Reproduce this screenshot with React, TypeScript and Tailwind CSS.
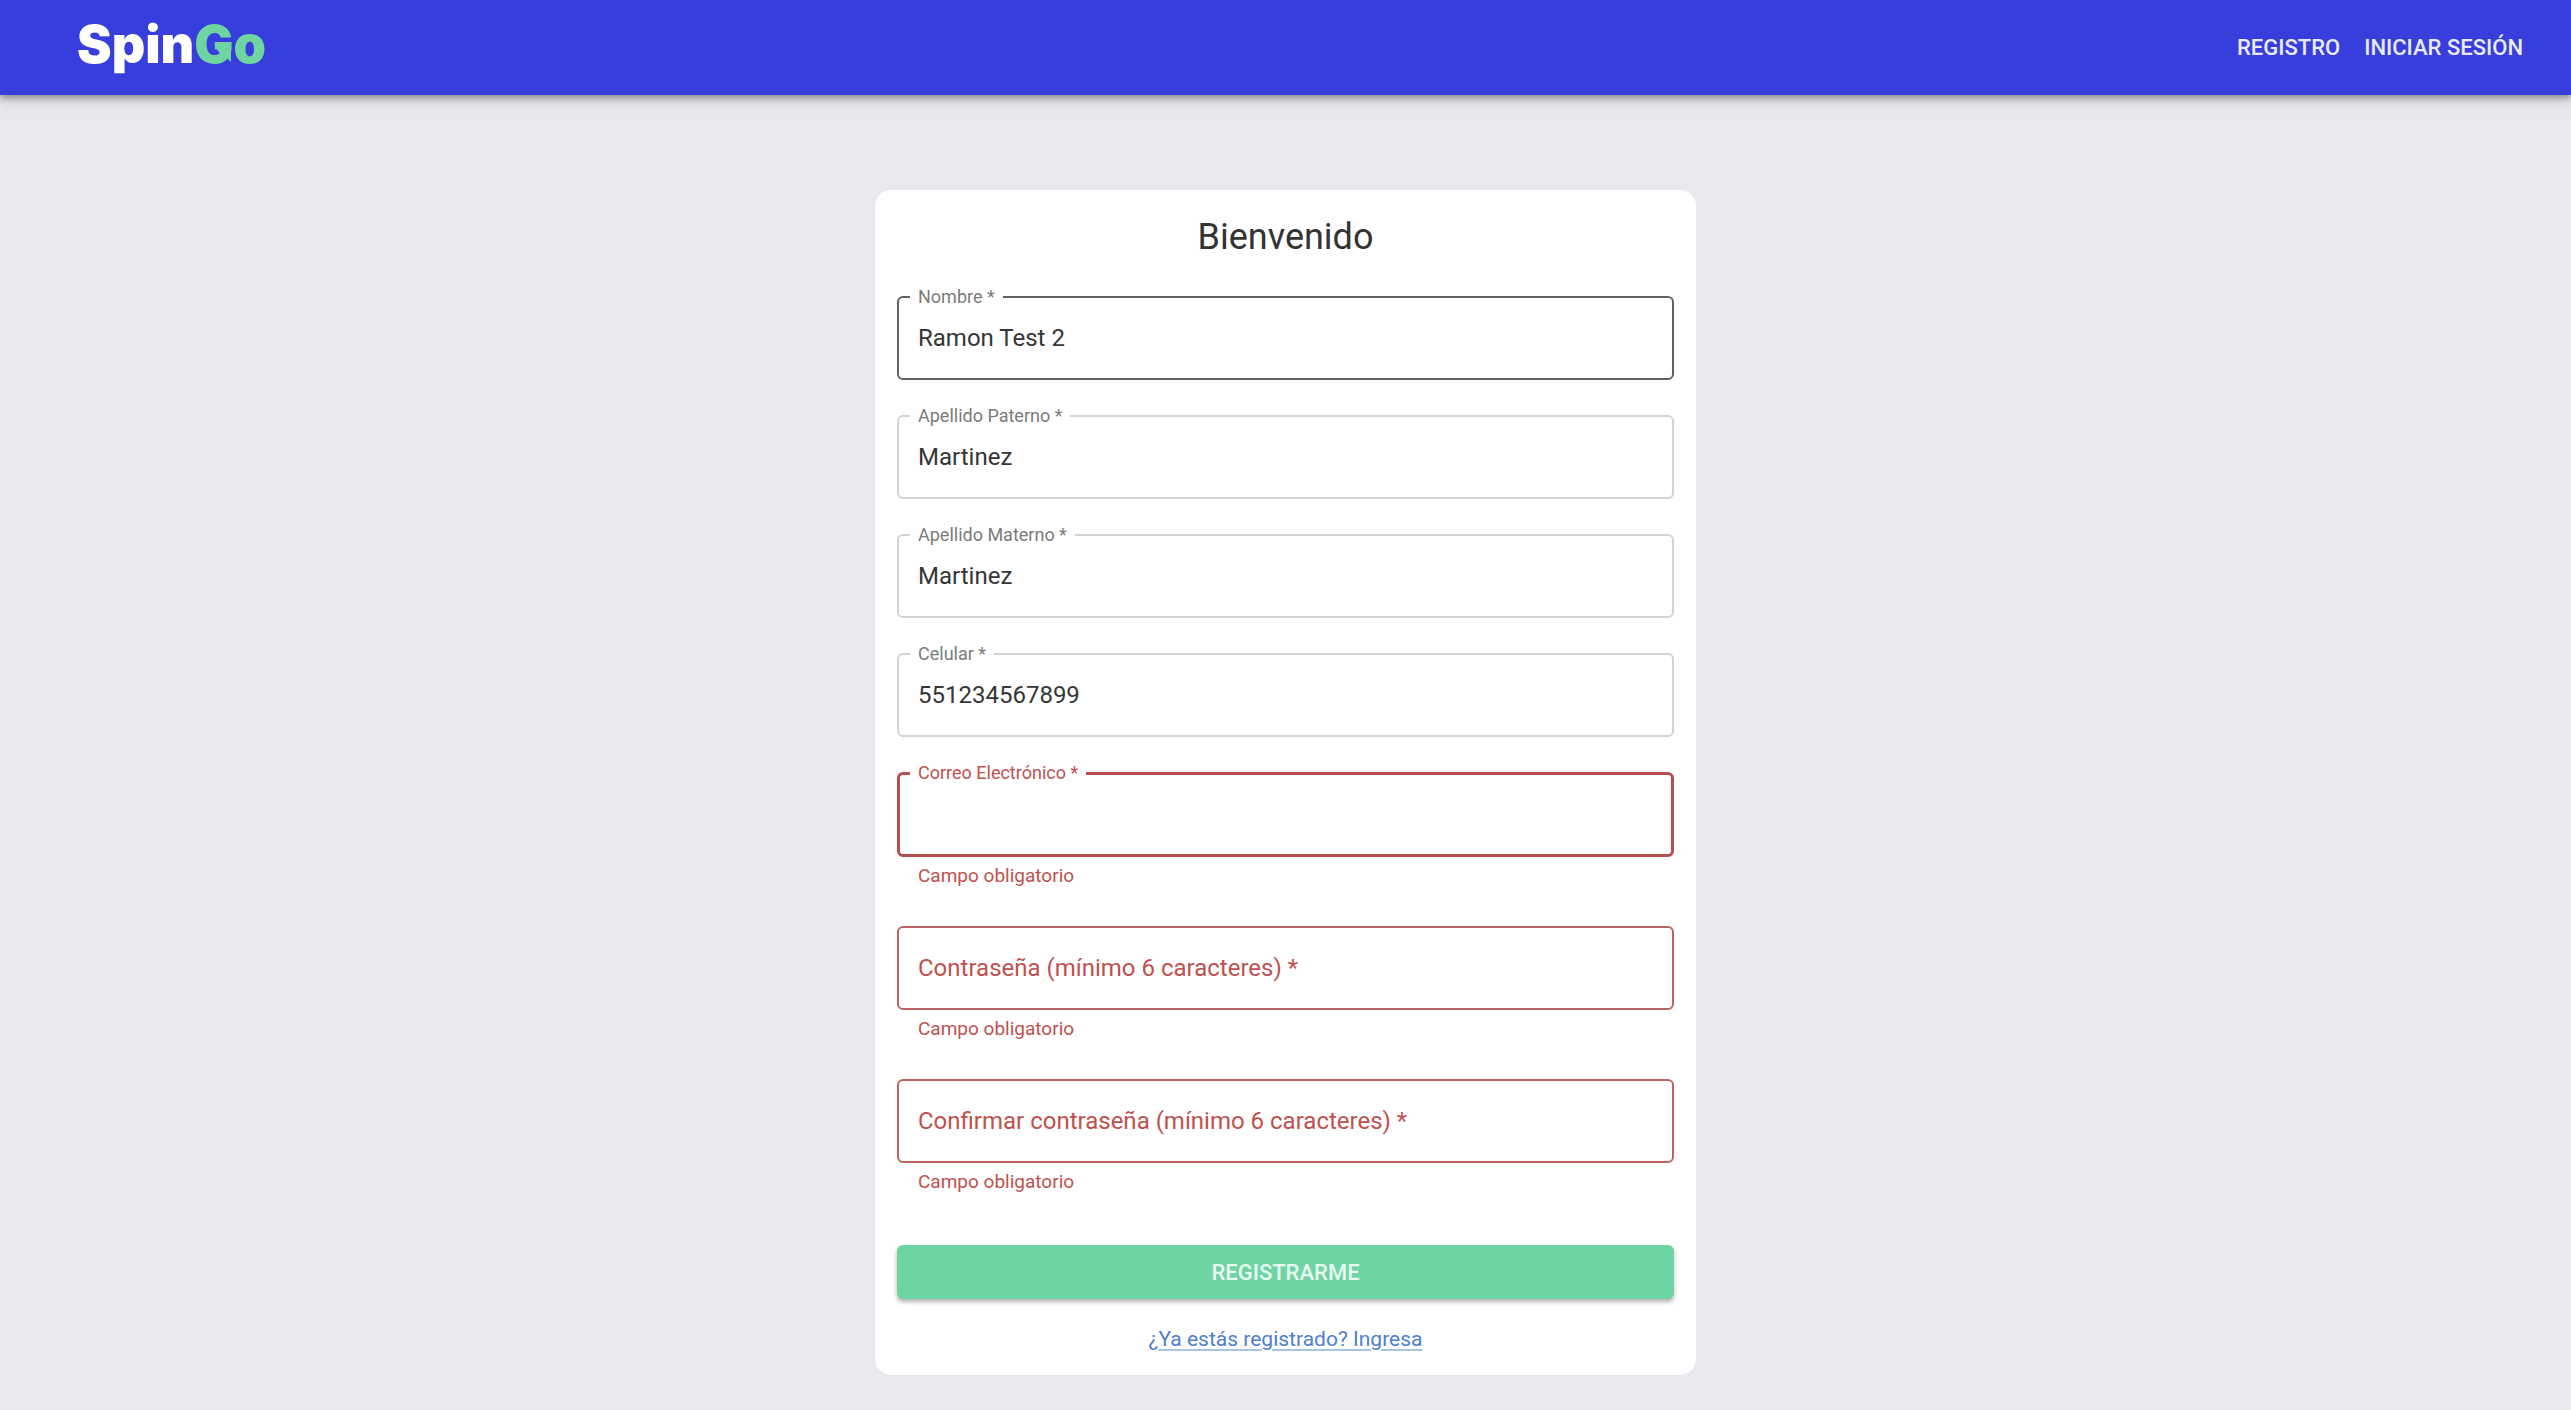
import React, { useState } from 'react';
import clsx from 'clsx';

type FieldState = 'normal' | 'hover' | 'error' | 'errorFocus';

interface Field {
  id: string;
  label: string;
  type: string;
  value: string;
  state: FieldState;
  helper?: string;
}

const fields: Field[] = [
  { id: 'nombre', label: 'Nombre *', type: 'text', value: 'Ramon Test 2', state: 'hover' },
  { id: 'paterno', label: 'Apellido Paterno *', type: 'text', value: 'Martinez', state: 'normal' },
  { id: 'materno', label: 'Apellido Materno *', type: 'text', value: 'Martinez', state: 'normal' },
  { id: 'celular', label: 'Celular *', type: 'tel', value: '551234567899', state: 'normal' },
  { id: 'correo', label: 'Correo Electrónico *', type: 'email', value: '', state: 'errorFocus', helper: 'Campo obligatorio' },
  { id: 'password', label: 'Contraseña (mínimo 6 caracteres) *', type: 'password', value: '', state: 'error', helper: 'Campo obligatorio' },
  { id: 'confirm', label: 'Confirmar contraseña (mínimo 6 caracteres) *', type: 'password', value: '', state: 'error', helper: 'Campo obligatorio' },
];

const borders: Record<FieldState, string> = {
  normal: 'border-2 border-[#d3d3d3] px-[11px]',
  hover: 'border-2 border-[#626262] px-[11px]',
  error: 'border-2 border-[#bd6361] px-[11px]',
  errorFocus: 'border-3 border-[#b54f4d] px-2.5',
};

const TextField = ({ field }: { field: Field }) => {
  const [value, setValue] = useState(field.value);
  const isError = field.state === 'error' || field.state === 'errorFocus';
  const floating = value !== '' || field.state === 'errorFocus';

  return (
    <div>
      {floating ? (
        <fieldset className={clsx('min-w-0 rounded-md', borders[field.state])}>
          <legend className="px-2 text-lg leading-6">
            <label htmlFor={field.id} className={isError ? 'text-[#bf514e]' : 'text-[#7b7b7b]'}>
              {field.label}
            </label>
          </legend>
          <input
            id={field.id}
            type={field.type}
            value={value}
            onChange={(e) => setValue(e.target.value)}
            className="mt-3.5 mb-[25px] block h-[30px] w-full px-2 text-2xl text-[#363636] outline-none"
          />
        </fieldset>
      ) : (
        <div className={clsx('mt-[11px] grid h-[84px] items-center rounded-md', borders[field.state])}>
          <label htmlFor={field.id} className="col-start-1 row-start-1 px-2 text-2xl text-[#bf514e]">
            {field.label}
          </label>
          <input
            id={field.id}
            type={field.type}
            value={value}
            onChange={(e) => setValue(e.target.value)}
            className="col-start-1 row-start-1 h-[30px] w-full bg-transparent px-2 text-2xl text-[#363636] outline-none"
          />
        </div>
      )}
      {field.helper && <p className="mt-1 px-[21px] text-[19px] leading-[30px] text-[#bf514e]">{field.helper}</p>}
    </div>
  );
};

const Logo = () => (
  <a href="#" className="pb-1.5 font-['Inter',sans-serif] text-[52px] leading-[76px] font-black text-white">
    Spin
    <span className="relative text-[#6dd4a2]">
      Go
      {/* arrow tip on the bar of the G */}
      <svg className="absolute top-8 left-5 h-[18px] w-[18px]" viewBox="0 0 18 18" fill="currentColor" aria-hidden="true">
        <path d="M1 1H17V17L12 12L6 9Z" />
      </svg>
    </span>
  </a>
);

const Navbar = () => (
  <header className="flex h-[95px] items-center justify-between bg-[#373edb] pr-12 pl-[77px] shadow-[0_3px_6px_rgba(0,0,0,0.3),0_6px_14px_rgba(0,0,0,0.14)]">
    <Logo />
    <nav className="flex gap-6 text-[22px] font-medium text-[#e9eafc]">
      <a href="#registro">REGISTRO</a>
      <a href="#login">INICIAR SESIÓN</a>
    </nav>
  </header>
);

const App = () => {
  return (
    <div className="min-h-screen bg-[#e8e9ee] font-['Roboto',sans-serif]">
      <Navbar />
      <main className="px-4 pt-[95px] pb-9">
        <form
          className="mx-auto max-w-[821px] rounded-2xl bg-white px-[22px] py-5"
          onSubmit={(e) => e.preventDefault()}
        >
          <h1 className="mb-[21px] text-center text-4xl leading-[54px] text-[#333333]">Bienvenido</h1>
          <div className="flex flex-col gap-6">
            {fields.map((field) => (
              <TextField key={field.id} field={field} />
            ))}
          </div>
          <button
            type="submit"
            className="mt-12 h-[54px] w-full rounded-md bg-[#6dd4a2] text-[22px] font-medium text-[#e6faf0] shadow-[0_3px_4px_rgba(0,0,0,0.3)]"
          >
            REGISTRARME
          </button>
          <p className="mt-6 text-center text-[21px] leading-8">
            <a href="#login" className="text-[#4f80cb] underline decoration-[#a9c4ea] decoration-2 underline-offset-3">
              ¿Ya estás registrado? Ingresa
            </a>
          </p>
        </form>
      </main>
    </div>
  );
};

export default App;
